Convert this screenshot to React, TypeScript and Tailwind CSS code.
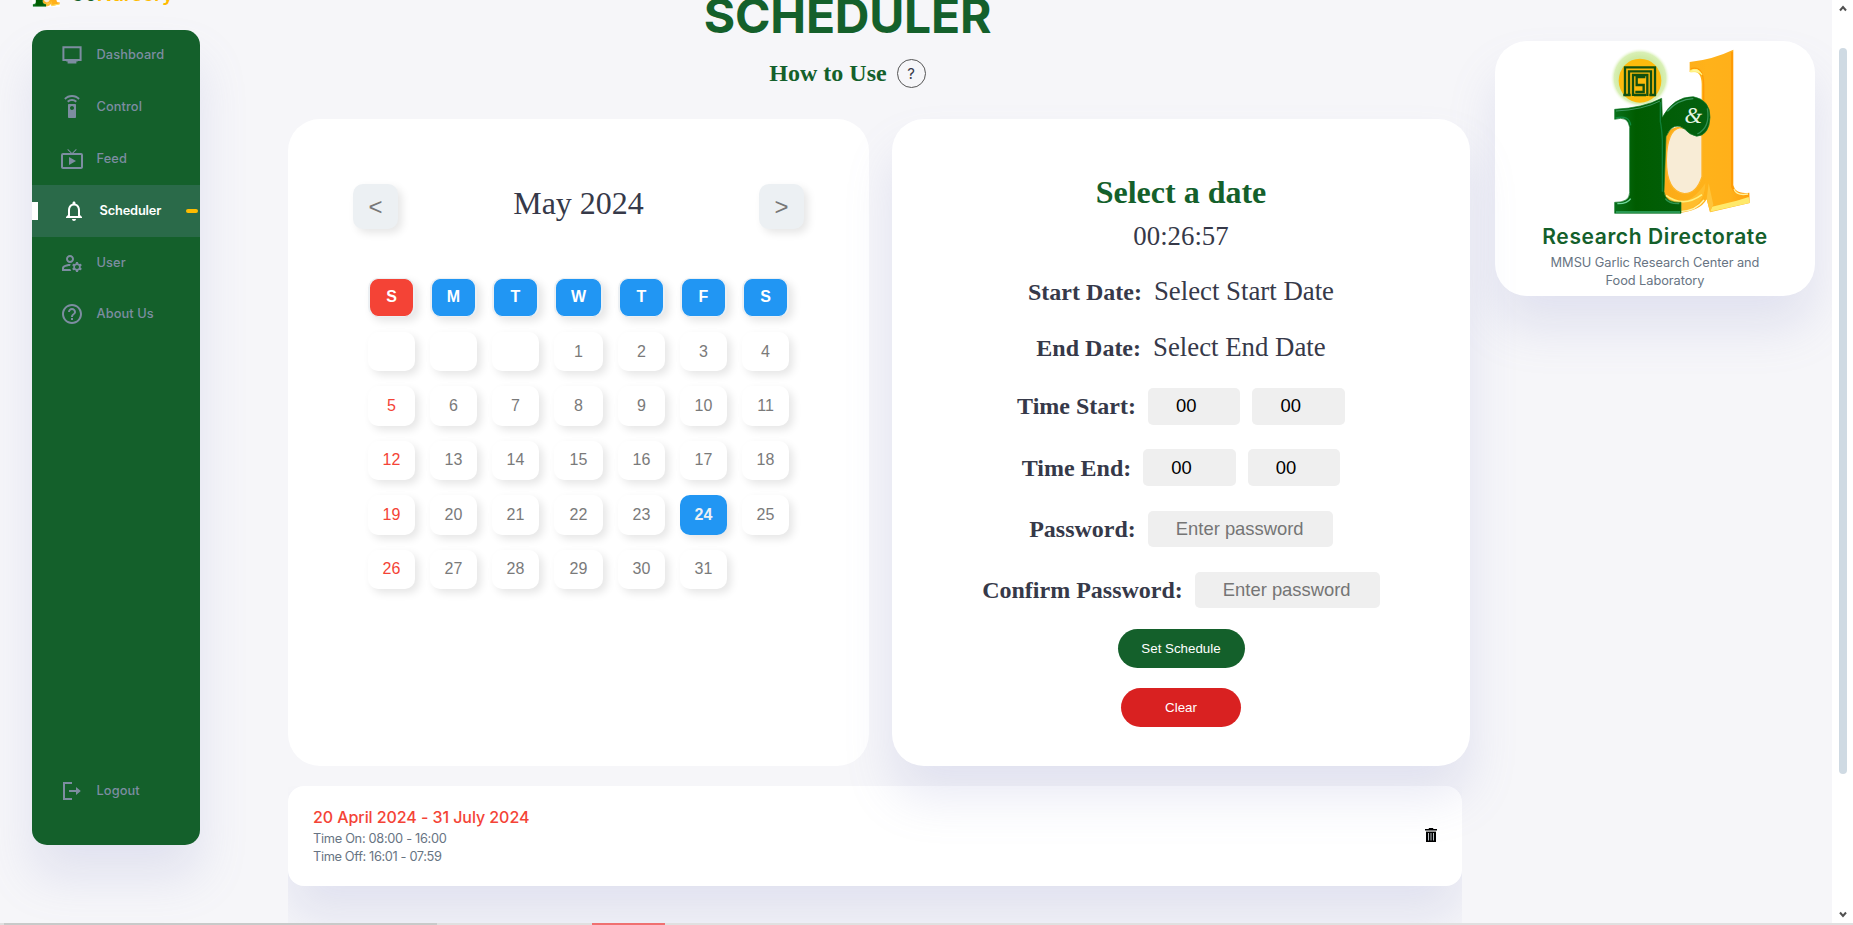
import type { ReactNode } from "react";
import {
  MdSettingsRemote,
  MdLiveTv,
  MdNotificationsNone,
  MdOutlineManageAccounts,
  MdHelpOutline,
} from "react-icons/md";

const serif = "font-['Liberation_Serif',serif]";
const sans = "font-['Liberation_Sans',sans-serif]";
const cardShadow = "shadow-[0_32px_48px_rgba(132,139,200,0.18)]";

function MonitorIcon() {
  return (
    <svg viewBox="0 0 24 24" width="24" height="24" fill="none">
      <path d="M3.4 4.2h17.2v12.8H3.4z" stroke="currentColor" strokeWidth="2" />
      <path d="M6.2 17h11.6v1.6h-1.4v2H7.6v-2H6.2z" fill="currentColor" />
    </svg>
  );
}

function LogoutIcon() {
  return (
    <svg viewBox="0 0 24 24" width="24" height="24" fill="none">
      <path d="M12 4H4v16h8" stroke="currentColor" strokeWidth="2" />
      <path d="M9 11h7V8l4.8 4-4.8 4v-3H9z" fill="currentColor" />
    </svg>
  );
}

function TrashIcon() {
  return (
    <svg viewBox="0 0 12 14" width="12" height="14">
      <path d="M3.8 0h4.4v1H12v1.6H0V1h3.8z" fill="#000" />
      <path d="M1 3.6h10V14H1z" fill="#000" />
      <path d="M3.5 5v7.5M6 5v7.5M8.5 5v7.5" stroke="#cfd6dd" strokeWidth="0.9" />
    </svg>
  );
}

function Logo({ id, viewBox, className }: { id: string; viewBox: string; className: string }) {
  const g = `${id}-green`;
  const o = `${id}-orange`;
  const h = `${id}-halo`;
  const dPath =
    "M299 66Q370 58 430 29L430 435Q436 464 478 458L479 489L360 517L350 478Q330 515 262 519L222 470L222 300Q235 258 275 260L335 290V132Q334 88 299 96Z";
  const rPath =
    "M74 208Q160 204 215 175L217 232Q250 170 310 170Q361 180 360 232Q358 286 320 289Q298 284 285 268Q250 240 228 290L222 455Q226 490 273 487V520H74V487Q118 488 119 458V262Q114 226 74 238Z";
  return (
    <svg viewBox={viewBox} className={className}>
      <defs>
        <linearGradient id={g} x1="0" x2="1" y1="0" y2="0">
          <stop offset="0" stopColor="#08701a" />
          <stop offset="0.22" stopColor="#005c00" />
          <stop offset="1" stopColor="#046010" />
        </linearGradient>
        <linearGradient id={o} x1="0" x2="1" y1="0" y2="0">
          <stop offset="0" stopColor="#fbab18" />
          <stop offset="0.5" stopColor="#ffb21a" />
          <stop offset="0.78" stopColor="#ffb01a" />
          <stop offset="1" stopColor="#ff9f0c" />
        </linearGradient>
        <radialGradient id={h}>
          <stop offset="0.7" stopColor="#cfeaa4" />
          <stop offset="0.86" stopColor="#d9f0b6" />
          <stop offset="1" stopColor="#fff" stopOpacity="0" />
        </radialGradient>
      </defs>
      <path d={dPath} fill={`url(#${o})`} />
      <path d="M426 36V440Q434 466 474 463" fill="none" stroke="#ff9a05" strokeWidth="6" />
      <path d="M303 86Q341 76 341 135V280" fill="none" stroke="#ff9a05" strokeWidth="4" />
      <path d="M301 92Q324 80 336 104Q324 92 301 96Z" fill="#fff6a0" stroke="#fff27a" strokeWidth="3" />
      <path d="M360 515L366 500L440 482L476 471L479 489Z" fill="#ffe96a" />
      <path d="M432 448Q440 468 474 462" fill="none" stroke="#fff3a0" strokeWidth="4" />
      <path d="M350 478L360 515L370 494L356 430Z" fill="#ffc43a" />
      <path d="M226 462Q285 520 346 430Q345 505 268 518Z" fill="#ffbd2c" />
      <path d="M228 466Q280 505 336 464" fill="none" stroke="#fff07c" strokeWidth="5" />
      <path d="M272 515Q318 512 342 480" fill="none" stroke="#fff6b0" strokeWidth="4" />
      <path
        d="M336 288V410Q320 461 283 461Q229 455 229 360Q231 270 270 263Q300 264 336 288Z"
        fill="#f8ecd6"
        stroke="#ffb52a"
        strokeWidth="4"
      />
      <circle cx="150" cy="114" r="90" fill={`url(#${h})`} />
      <ellipse cx="150" cy="122" rx="64" ry="66" fill="#fdbb0d" />
      <g fill="none" stroke="#12500f" strokeWidth="7">
        <path d="M105 168V82H195V168" />
        <path d="M117 168V94H183V168" />
        <path d="M129 168V105H172V168" />
        <path d="M166 111H140V135H161V156H136" />
        <path d="M100 165H122M132 165H168M178 165H198" />
      </g>
      <path d={rPath} fill={`url(#${g})`} stroke="#127a2c" strokeWidth="2" />
      <path d="M78 213Q160 209 210 183" fill="none" stroke="#3d9a62" strokeWidth="3" />
      <path d="M211 186V245Q215 262 217 300V455" fill="none" stroke="#0f8038" strokeWidth="4" />
      <path d="M232 214Q264 178 310 176" fill="none" stroke="#3d9a62" strokeWidth="4" />
      <path d="M352 205Q362 262 322 282" fill="none" stroke="#2f8f50" strokeWidth="4" />
      <path d="M77 234Q118 224 122 256" fill="none" stroke="#0f8a3f" strokeWidth="4" />
      <path d="M82 491Q112 492 122 476" fill="none" stroke="#6fd69c" strokeWidth="4" />
      <path d="M226 476Q236 492 268 491" fill="none" stroke="#2f9552" strokeWidth="4" />
      <path d="M78 516H270" stroke="#35a868" strokeWidth="4" />
      <text
        x="310"
        y="248"
        textAnchor="middle"
        fill="#e6f6e6"
        fontSize="68"
        fontStyle="italic"
        fontFamily="Liberation Serif, serif"
      >
        &amp;
      </text>
    </svg>
  );
}

function NavItem({ icon, label }: { icon: ReactNode; label: string }) {
  return (
    <a className="flex h-[52px] items-center gap-[13px] pl-[27.5px] text-[#7d8da1]">
      {icon}
      <span className="text-[12.8px] font-medium tracking-[0.1px]">{label}</span>
    </a>
  );
}

function Sidebar() {
  return (
    <aside className="ml-8 flex w-[168px] shrink-0 flex-col">
      <div className="flex h-[30px] items-start gap-[10px]">
        <div className="-mt-[27px] h-[34px] w-7 shrink-0 bg-white">
          <Logo id="brand" viewBox="60 20 425 502" className="h-[34px] w-7" />
        </div>
        <h2 className="-mt-[20px] text-[20px] leading-[28px] font-semibold tracking-[-0.2px] text-[#14602b]">
          Go<span className="text-[#ffbb00]">Nursery</span>
        </h2>
      </div>
      <nav className={`flex h-[815px] flex-col rounded-[15px] bg-[#14602b] ${cardShadow}`}>
        <div className="-mt-px">
          <NavItem icon={<MonitorIcon />} label="Dashboard" />
          <NavItem icon={<MdSettingsRemote size={24} />} label="Control" />
          <NavItem icon={<MdLiveTv size={24} />} label="Feed" />
          <a className="flex h-[52px] items-center bg-[#2a6a49] text-white">
            <span className="h-[18px] w-1.5 bg-white" />
            <MdNotificationsNone size={24} className="ml-[24px]" />
            <span className="ml-[13.5px] text-[12.8px] font-semibold tracking-[-0.15px]">Scheduler</span>
            <span className="mr-0.5 ml-auto h-1 w-3 rounded-sm bg-[#ffbb00]" />
          </a>
          <NavItem icon={<MdOutlineManageAccounts size={24} />} label="User" />
          <div className="-mt-px">
            <NavItem icon={<MdHelpOutline size={24} />} label="About Us" />
          </div>
        </div>
        <div className="mt-auto mb-[28px]">
          <NavItem icon={<LogoutIcon />} label="Logout" />
        </div>
      </nav>
    </aside>
  );
}

const days = ["S", "M", "T", "W", "T", "F", "S"];
const cellShadow = "shadow-[4px_4px_8px_rgba(0,0,0,0.1)]";

function Calendar() {
  const cells = [null, null, null, ...Array.from({ length: 31 }, (_, i) => i + 1)];
  return (
    <section className="h-[647px] w-[581px] rounded-[32px] bg-white px-[65px] pt-[65px]">
      <div className="flex items-start justify-between">
        <button className={`h-[45px] w-[45px] rounded-[10px] bg-[#ecf0f3] text-2xl text-[#777] ${sans} ${cellShadow}`}>
          &lt;
        </button>
        <h3 className={`text-[32px] leading-[38px] text-[#363949] ${serif}`}>May 2024</h3>
        <button className={`h-[45px] w-[45px] rounded-[10px] bg-[#ecf0f3] text-2xl text-[#777] ${sans} ${cellShadow}`}>
          &gt;
        </button>
      </div>
      <div
        className={`mt-[48.6px] ml-[15px] grid auto-rows-[39.4px] grid-cols-[47px_47px_47px_49px_47px_47px_47px] gap-x-[15px] gap-y-[15px] text-base text-[#7a7a7a] ${sans}`}
      >
        {days.map((d, i) => (
          <div
            key={i}
            className={`flex items-center justify-center rounded-[10px] border-x-2 border-y border-[#ecf0f3] font-bold text-white ${cellShadow} ${i === 0 ? "bg-[#f44336]" : "bg-[#2196f3]"}`}
          >
            {d}
          </div>
        ))}
        {cells.map((n, i) => (
          <div
            key={i}
            className={`flex items-center justify-center rounded-[10px] ${cellShadow} ${
              n === 24
                ? "bg-[#2196f3] font-bold text-[#ecf0f3]"
                : i % 7 === 0
                  ? "bg-white text-[#f44336]"
                  : "bg-white"
            }`}
          >
            {n}
          </div>
        ))}
      </div>
    </section>
  );
}

function Label({ children }: { children: ReactNode }) {
  return <span className={`text-2xl font-bold text-[#363949] ${serif}`}>{children}</span>;
}

function Field({ value, placeholder, className }: { value?: string; placeholder?: string; className: string }) {
  return (
    <input
      defaultValue={value}
      placeholder={placeholder}
      className={`h-[36.5px] rounded-[5px] bg-[#efefef] pr-2 pl-[28px] text-[18.4px] text-black placeholder:text-[#757575] ${sans} ${className}`}
    />
  );
}

function ScheduleForm() {
  return (
    <section
      className={`flex h-[647px] w-[578px] flex-col items-center rounded-[32px] bg-white pt-[53px] text-[#363949] ${cardShadow}`}
    >
      <h2 className={`text-[32px] leading-10 font-bold text-[#14602b] ${serif}`}>Select a date</h2>
      <p className={`mt-2 text-[26.8px] leading-8 ${serif}`}>00:26:57</p>
      <div className="mt-[23px] flex h-8 items-baseline gap-3 leading-8">
        <Label>Start Date:</Label>
        <span className={`text-[26.8px] leading-8 ${serif}`}>Select Start Date</span>
      </div>
      <div className="mt-[24px] flex h-8 items-baseline gap-3 leading-8">
        <Label>End Date:</Label>
        <span className={`text-[26.8px] leading-8 ${serif}`}>Select End Date</span>
      </div>
      <div className="mt-[25px] flex flex-col items-center gap-[24.8px]">
        <div className="flex items-center gap-3">
          <Label>Time Start:</Label>
          <Field value="00" className="w-[92.5px]" />
          <Field value="00" className="w-[92.5px]" />
        </div>
        <div className="flex items-center gap-3">
          <Label>Time End:</Label>
          <Field value="00" className="w-[92.5px]" />
          <Field value="00" className="w-[92.5px]" />
        </div>
        <div className="flex items-center gap-3">
          <Label>Password:</Label>
          <Field placeholder="Enter password" className="w-[185px]" />
        </div>
        <div className="flex items-center gap-3">
          <Label>Confirm Password:</Label>
          <Field placeholder="Enter password" className="w-[185px]" />
        </div>
      </div>
      <button className={`mt-[21px] h-[39px] w-[127px] rounded-[20px] bg-[#14602b] text-[13.33px] text-white ${sans}`}>
        Set Schedule
      </button>
      <button className={`mt-5 h-[39px] w-[120px] rounded-[20px] bg-[#d92121] text-[13.33px] text-white ${sans}`}>
        Clear
      </button>
    </section>
  );
}

function ScheduleList() {
  return (
    <div className="mt-5 h-[160px] w-[1174px] overflow-hidden">
      <div className={`flex h-[100px] items-center justify-between rounded-2xl bg-white pr-[25px] pl-[25px] ${cardShadow}`}>
        <div className="flex h-full flex-col pt-[19px] text-[12.8px] leading-[18px] text-[#677483]">
          <h3 className="mb-px text-base leading-6 font-medium tracking-[-0.07px] text-[#f44336]">
            20 April 2024 - 31 July 2024
          </h3>
          <p className="tracking-[-0.3px]">Time On: 08:00 - 16:00</p>
          <p className="tracking-[-0.36px]">Time Off: 16:01 - 07:59</p>
        </div>
        <div className="pb-0.5">
          <TrashIcon />
        </div>
      </div>
    </div>
  );
}

function AboutCard() {
  return (
    <aside className={`mt-[41px] ml-[25px] flex h-[255px] w-80 shrink-0 flex-col rounded-[32px] bg-white ${cardShadow}`}>
      <Logo id="card" viewBox="0 3 540 537" className="ml-[95px] h-[179px] w-[180px]" />
      <h2 className="mt-[3px] text-center text-[21px] leading-7 font-semibold tracking-[0.6px] text-[#14602b]">
        Research Directorate
      </h2>
      <p className="mt-[3px] text-center text-[12.8px] leading-[18px] tracking-[-0.05px] text-[#677483]">
        MMSU Garlic Research Center and
        <br />
        Food Laboratory
      </p>
    </aside>
  );
}

function Scrollbar() {
  return (
    <div className="ml-auto flex w-[21px] shrink-0 flex-col items-center bg-white">
      <svg className="mt-[5px] ml-[1px]" width="8" height="7" viewBox="0 0 8 7" fill="none">
        <path d="M1 5.5L4 2L7 5.5" stroke="#505050" strokeWidth="2" />
      </svg>
      <div className="mt-9 h-[726px] w-2 rounded-full bg-[#cfdae3]" />
      <svg className="mt-auto mb-[7px] ml-[1px]" width="8" height="7" viewBox="0 0 8 7" fill="none">
        <path d="M1 1.5L4 5L7 1.5" stroke="#505050" strokeWidth="2" />
      </svg>
    </div>
  );
}

export default function App() {
  return (
    <div className="relative flex h-[925px] w-full overflow-hidden bg-[#f6f6f9] font-['Inter',sans-serif]">
      <Sidebar />
      <main className="ml-[88px] w-[1182px] shrink-0">
        <header className="flex w-[1119px] flex-col items-center">
          <h1 className="-mt-4 text-[48px] leading-[64px] font-bold tracking-[-0.25px] text-[#14602b]">SCHEDULER</h1>
          <div className="mt-[11px] flex h-[30px] items-center gap-2.5">
            <span className={`-mt-0.5 text-2xl font-bold text-[#14602b] ${serif}`}>How to Use</span>
            <button className="-mt-0.5 h-[29px] w-[29px] rounded-full border border-[#555] text-[15px] leading-none text-[#363949]">
              ?
            </button>
          </div>
        </header>
        <div className="relative z-10 mt-[30px] flex gap-[23px]">
          <Calendar />
          <ScheduleForm />
        </div>
        <ScheduleList />
      </main>
      <AboutCard />
      <Scrollbar />
      <div className="absolute bottom-0 left-0 z-20 flex h-0.5 w-full bg-[#e0e0e0]">
        <span className="ml-1 w-[433px] bg-[#c8cac9]" />
        <span className="ml-[155px] w-[73px] bg-[#f07070]" />
      </div>
    </div>
  );
}
